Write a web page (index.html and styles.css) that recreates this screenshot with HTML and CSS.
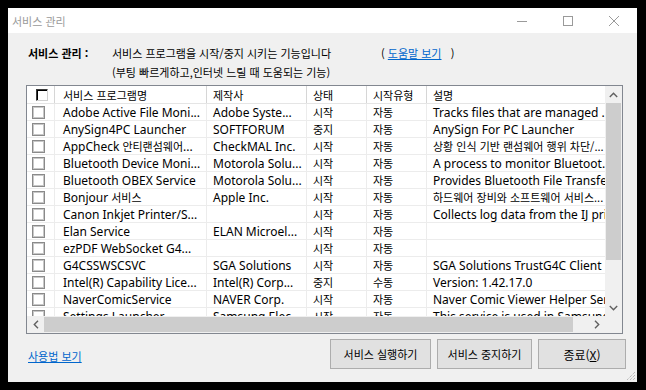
FILE: index.html
```html
<!DOCTYPE html>
<html lang="ko">
<head>
<meta charset="utf-8">
<title>서비스 관리</title>
<link rel="stylesheet" href="styles.css">
</head>
<body>
<div class="window">
  <div class="titlebar">
    <span class="title">서비스 관리</span>
    <div class="controls">
      <div class="ctrl"><svg width="10" height="10" viewBox="0 0 10 10"><line x1="0" y1="5.5" x2="10" y2="5.5" stroke="#9a9a9a" stroke-width="1"/></svg></div>
      <div class="ctrl"><svg width="10" height="10" viewBox="0 0 10 10"><rect x="0.5" y="0.5" width="9" height="9" fill="none" stroke="#9a9a9a" stroke-width="1"/></svg></div>
      <div class="ctrl"><svg width="10" height="10" viewBox="0 0 10 10"><path d="M0 0 L10 10 M10 0 L0 10" stroke="#9a9a9a" stroke-width="1"/></svg></div>
    </div>
  </div>
  <div class="content">
    <div class="intro">
      <div class="intro-label">서비스 관리 :</div>
      <div class="intro-text">
        <div class="line1"><span class="line1-desc">서비스 프로그램을 시작/중지 시키는 기능입니다</span><span class="help">(&nbsp;<a class="link" href="#">도움말 보기</a>&nbsp;&nbsp;&nbsp;)</span></div>
        <div>(부팅 빠르게하고,인터넷 느릴 때 도움되는 기능)</div>
      </div>
    </div>
    <div class="list">
      <div class="viewport">
        <div class="hrow">
          <div class="h c0"><span class="hcb"></span></div>
          <div class="h c1 ko">서비스 프로그램명</div>
          <div class="h c2 ko">제작사</div>
          <div class="h c3 ko">상태</div>
          <div class="h c4 ko">시작유형</div>
          <div class="h c5 ko">설명</div>
        </div>
        <div class="row"><div class="c c0"><span class="cb"></span></div><div class="c c1">Adobe Active File Moni...</div><div class="c c2">Adobe Syste...</div><div class="c c3 ko">시작</div><div class="c c4 ko">자동</div><div class="c c5">Tracks files that are managed ...</div></div>
        <div class="row"><div class="c c0"><span class="cb"></span></div><div class="c c1">AnySign4PC Launcher</div><div class="c c2">SOFTFORUM</div><div class="c c3 ko">중지</div><div class="c c4 ko">자동</div><div class="c c5">AnySign For PC Launcher</div></div>
        <div class="row"><div class="c c0"><span class="cb"></span></div><div class="c c1">AppCheck <span class="ko">안티랜섬웨어</span> ...</div><div class="c c2">CheckMAL Inc.</div><div class="c c3 ko">시작</div><div class="c c4 ko">자동</div><div class="c c5 ko">상황 인식 기반 랜섬웨어 행위 차단/...</div></div>
        <div class="row"><div class="c c0"><span class="cb"></span></div><div class="c c1">Bluetooth Device Moni...</div><div class="c c2">Motorola Solu...</div><div class="c c3 ko">시작</div><div class="c c4 ko">자동</div><div class="c c5">A process to monitor Bluetoot...</div></div>
        <div class="row"><div class="c c0"><span class="cb"></span></div><div class="c c1">Bluetooth OBEX Service</div><div class="c c2">Motorola Solu...</div><div class="c c3 ko">시작</div><div class="c c4 ko">자동</div><div class="c c5">Provides Bluetooth File Transfe...</div></div>
        <div class="row"><div class="c c0"><span class="cb"></span></div><div class="c c1">Bonjour <span class="ko">서비스</span></div><div class="c c2">Apple Inc.</div><div class="c c3 ko">시작</div><div class="c c4 ko">자동</div><div class="c c5 ko">하드웨어 장비와 소프트웨어 서비스...</div></div>
        <div class="row"><div class="c c0"><span class="cb"></span></div><div class="c c1">Canon Inkjet Printer/S...</div><div class="c c2"></div><div class="c c3 ko">시작</div><div class="c c4 ko">자동</div><div class="c c5">Collects log data from the IJ printer</div></div>
        <div class="row"><div class="c c0"><span class="cb"></span></div><div class="c c1">Elan Service</div><div class="c c2">ELAN Microel...</div><div class="c c3 ko">시작</div><div class="c c4 ko">자동</div><div class="c c5"></div></div>
        <div class="row"><div class="c c0"><span class="cb"></span></div><div class="c c1">ezPDF WebSocket G4...</div><div class="c c2"></div><div class="c c3 ko">시작</div><div class="c c4 ko">자동</div><div class="c c5"></div></div>
        <div class="row"><div class="c c0"><span class="cb"></span></div><div class="c c1">G4CSSWSCSVC</div><div class="c c2">SGA Solutions</div><div class="c c3 ko">시작</div><div class="c c4 ko">자동</div><div class="c c5">SGA Solutions TrustG4C Client ...</div></div>
        <div class="row"><div class="c c0"><span class="cb"></span></div><div class="c c1">Intel(R) Capability Lice...</div><div class="c c2">Intel(R) Corp...</div><div class="c c3 ko">중지</div><div class="c c4 ko">수동</div><div class="c c5">Version: 1.42.17.0</div></div>
        <div class="row"><div class="c c0"><span class="cb"></span></div><div class="c c1">NaverComicService</div><div class="c c2">NAVER Corp.</div><div class="c c3 ko">시작</div><div class="c c4 ko">자동</div><div class="c c5">Naver Comic Viewer Helper Ser...</div></div>
        <div class="row"><div class="c c0"><span class="cb"></span></div><div class="c c1">Settings Launcher</div><div class="c c2">Samsung Elec...</div><div class="c c3 ko">시작</div><div class="c c4 ko">자동</div><div class="c c5">This service is used in Samsung ...</div></div>
      </div>
      <div class="vscroll">
        <div class="sbtn"><svg width="9" height="6" viewBox="0 0 9 6"><polyline points="0.8,5 4.5,1.3 8.2,5" fill="none" stroke="#606060" stroke-width="1.4"/></svg></div>
        <div class="vtrack"><div class="vthumb"></div></div>
        <div class="sbtn"><svg width="9" height="6" viewBox="0 0 9 6"><polyline points="0.8,1 4.5,4.7 8.2,1" fill="none" stroke="#606060" stroke-width="1.4"/></svg></div>
      </div>
      <div class="hscroll">
        <div class="sbtn"><svg width="6" height="9" viewBox="0 0 6 9"><polyline points="5,0.8 1.3,4.5 5,8.2" fill="none" stroke="#606060" stroke-width="1.4"/></svg></div>
        <div class="htrack"><div class="hthumb"></div></div>
        <div class="sbtn"><svg width="6" height="9" viewBox="0 0 6 9"><polyline points="1,0.8 4.7,4.5 1,8.2" fill="none" stroke="#606060" stroke-width="1.4"/></svg></div>
      </div>
      <div class="corner"></div>
    </div>
    <div class="footer">
      <a class="link usage" href="#">사용법 보기</a>
      <div class="buttons">
        <button class="btn b1">서비스 실행하기</button>
        <button class="btn b2">서비스 중지하기</button>
        <button class="btn b3">종료(<u>X</u>)</button>
      </div>
    </div>
  </div>
  <svg class="grip" width="10" height="10" viewBox="0 0 10 10">
    <path d="M9 1 L1 9 M9 4 L4 9 M9 7 L7 9" stroke="#a0a0a0" stroke-width="1" stroke-dasharray="1 1"/>
  </svg>
</div>
</body>
</html>
```

FILE: styles.css
```css
* { box-sizing: border-box; }
html, body { margin: 0; padding: 0; }
body {
  background: #000;
  width: 646px;
  height: 390px;
  overflow: hidden;
  font-family: "Noto Sans", "Noto Sans CJK KR", sans-serif;
  color: #000;
}
.ko { font-family: "Noto Sans CJK KR", sans-serif; font-size: 11px; }

.window {
  margin: 8px 0 0 8px;
  width: 629px;
  height: 374px;
  background: #f0f0f0;
  display: flex;
  flex-direction: column;
  position: relative;
}
.titlebar {
  height: 25px;
  background: #fff;
  display: flex;
  align-items: center;
}
.title {
  padding-left: 4px;
  font-family: "Noto Sans CJK KR", sans-serif;
  font-size: 11px;
  color: #9a9a9a;
}
.controls { margin-left: auto; display: flex; height: 100%; }
.ctrl { width: 46px; display: flex; align-items: center; justify-content: center; }
.ctrl svg { display: block; }

.content {
  flex: 1;
  padding: 11px 14px 0 18px;
  display: flex;
  flex-direction: column;
}
.intro {
  display: flex;
  margin-left: 2px;
  font-family: "Noto Sans CJK KR", sans-serif;
  font-size: 11px;
  line-height: 19px;
}
.intro-label { width: 84px; font-weight: bold; }
.line1 { display: flex; }
.line1-desc { width: 269px; }
.link { color: #0066cc; text-decoration: underline; }

.list {
  margin-top: 3px;
  width: 597px;
  height: 249px;
  border: 1px solid #828790;
  background: #fff;
  display: grid;
  grid-template-columns: 578px 17px;
  grid-template-rows: 230px 17px;
}
.viewport { overflow: hidden; position: relative; }
.hrow, .row { display: flex; white-space: nowrap; }
.hrow { height: 18px; border-bottom: 1px solid #e5e5e5; }
.row { height: 17px; border-bottom: 1px solid #ececec; }
.h, .c {
  flex: none;
  overflow: hidden;
  padding-left: 6px;
  display: flex;
  align-items: center;
  font-size: 12px;
}
.h { border-right: 1px solid #d6d6d6; }
.c { border-right: 1px solid #ececec; }
.h.ko, .c.ko { font-size: 11px; }
.c0 { width: 28px; padding-left: 5px; }
.h.c0 { padding-left: 9px; }
.c1 { width: 152px; padding-left: 8px; }
.c2 { width: 100px; }
.c3 { width: 60px; }
.c4 { width: 60px; }
.c5 { width: 260px; border-right: none; }
.c1 .ko { margin: 0 3px; }
.c1 .ko:last-child { margin-right: 0; }

.cb {
  width: 13px;
  height: 13px;
  border: 1px solid #8a8a8a;
  box-shadow: inset 0 0 0 1px #c8c8c8;
  background: #fff;
}
.hcb {
  width: 12px;
  height: 12px;
  border: 1px solid;
  border-color: #3a3a3a #d0d0d0 #d0d0d0 #3a3a3a;
  box-shadow: inset 1px 1px 0 #000;
  background: #fff;
}

.vscroll {
  background: #f0f0f0;
  display: flex;
  flex-direction: column;
}
.sbtn {
  flex: none;
  width: 17px;
  height: 17px;
  display: flex;
  align-items: center;
  justify-content: center;
}
.sbtn svg { display: block; }
.vtrack { flex: 1; padding: 0 1px; }
.vthumb { height: 157px; background: #cdcdcd; }
.hscroll { background: #f0f0f0; display: flex; }
.htrack { flex: 1; padding: 1px 0; }
.hthumb { width: 529px; height: 100%; background: #cdcdcd; }
.corner { background: #f0f0f0; }

.footer {
  margin-top: 5px;
  margin-right: -3px;
  display: flex;
  align-items: center;
  height: 30px;
}
.usage {
  margin-left: 2px;
  margin-top: 4px;
  font-family: "Noto Sans CJK KR", sans-serif;
  font-size: 11px;
}
.buttons { margin-left: auto; display: flex; gap: 6px; height: 100%; }
.btn {
  height: 100%;
  background: #e1e1e1;
  border: 1px solid #adadad;
  font-family: "Noto Sans CJK KR", sans-serif;
  font-size: 11px;
  color: #000;
  padding: 0;
}
.b1 { width: 101px; }
.b2 { width: 95px; }
.b3 { width: 88px; font-size: 12px; }
.grip { position: absolute; right: 1px; bottom: 1px; }
```
